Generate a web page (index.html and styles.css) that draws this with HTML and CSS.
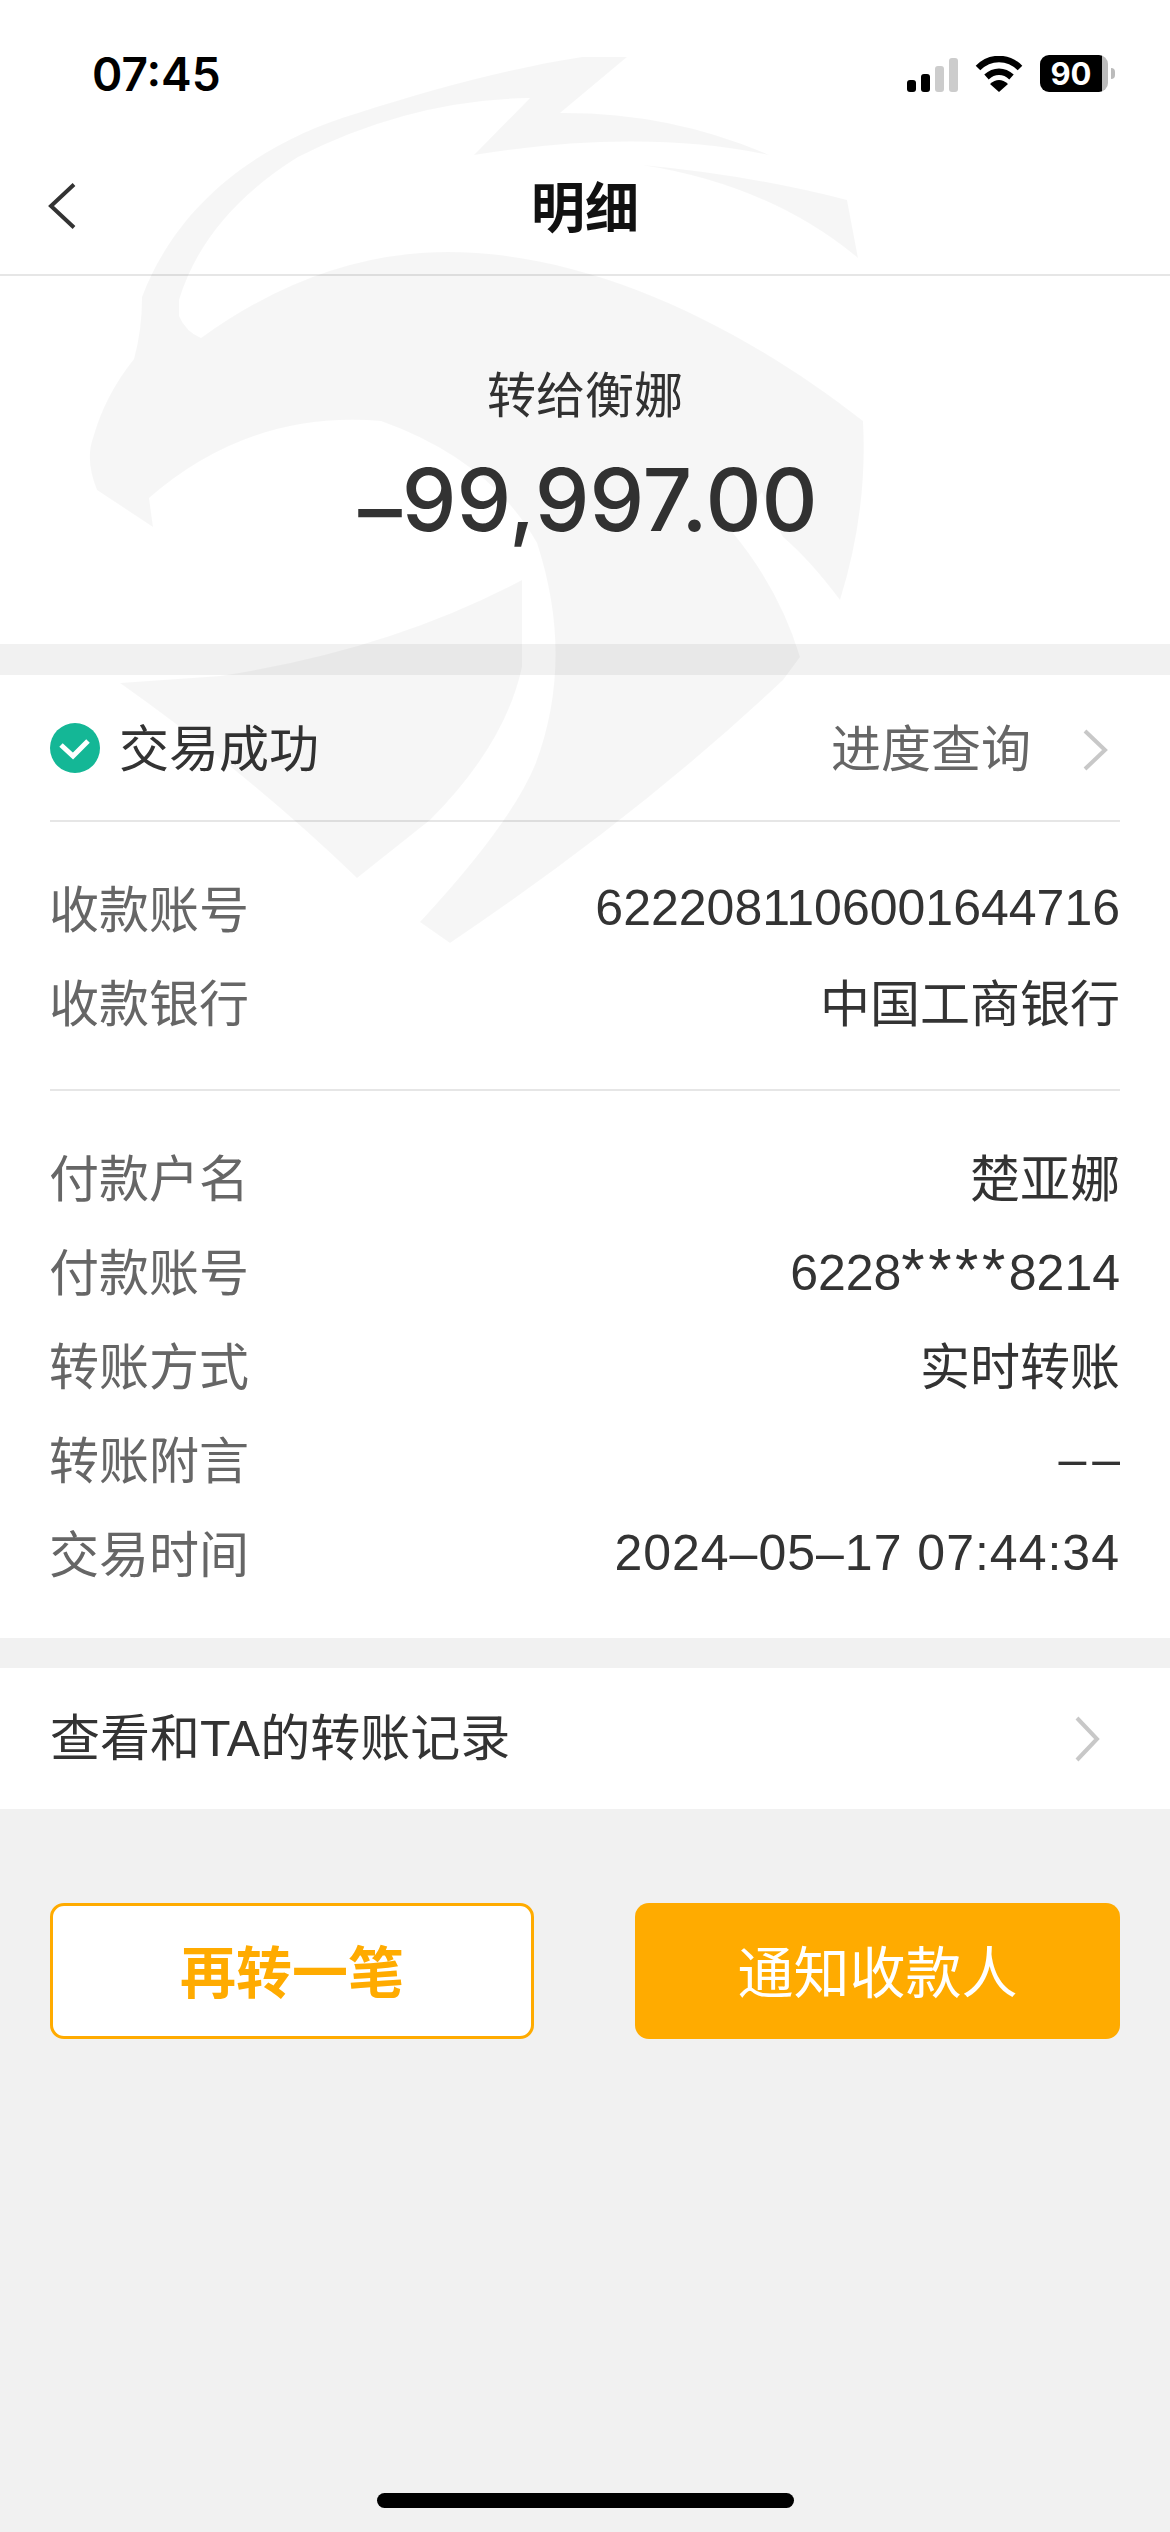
FILE: index.html

```html
<!DOCTYPE html>
<html lang="zh">
<head>
    <meta charset="UTF-8">
    <meta name="viewport" content="width=device-width, initial-scale=1.0">
    <title>明细</title>
    <link rel="stylesheet" href="styles.css">
</head>
<body>
<div class="page">

    <div class="status-bar">
        <span class="clock">07:45</span>
        <div class="status-icons">
            <svg class="signal" width="51" height="34" viewBox="0 0 51 34">
                <rect x="0" y="22" width="9" height="12" rx="3" fill="#000"/>
                <rect x="14" y="16" width="9" height="18" rx="3" fill="#000"/>
                <rect x="28" y="8" width="9" height="26" rx="3" fill="#ccc"/>
                <rect x="42" y="0" width="9" height="34" rx="3" fill="#ccc"/>
            </svg>
            <svg class="wifi" width="48" height="36" viewBox="0 0 48 36">
                <path d="M3 12C15 0 33 0 45 12" fill="none" stroke="#000" stroke-width="6.5"/>
                <path d="M11.500 21C19 14 29 14 36.500 21" fill="none" stroke="#000" stroke-width="6.500"/>
                <path d="M15 28Q24 20 33 28L24 36Z" fill="#000"/>
            </svg>
            <div class="battery"><span>90</span></div>
            <div class="battery-nub"></div>
        </div>
    </div>

    <div class="nav">
        <svg class="back" width="28" height="46" viewBox="0 0 28 46">
            <path d="M26 1.500L3 23L26 44.500" fill="none" stroke="#333" stroke-width="4"/>
        </svg>
        <h1>明细</h1>
    </div>

    <div class="summary">
        <div class="payee">转给衡娜</div>
        <div class="amount"><span class="minus">–</span>99,997.00</div>
    </div>

    <div class="card">
        <div class="state-row">
            <svg class="check" width="50" height="50" viewBox="0 0 50 50">
                <circle cx="25" cy="25" r="25" fill="#14b796"/>
                <path d="M11 22L23 33L38 18" fill="none" stroke="#fff" stroke-width="5"/>
            </svg>
            <span class="state">交易成功</span>
            <span class="progress">进度查询</span>
            <svg class="arrow" width="26" height="42" viewBox="0 0 26 42">
                <path d="M3 2L23 21L3 40" fill="none" stroke="#c8c8c8" stroke-width="4"/>
            </svg>
        </div>

        <div class="rows">
            <div class="row"><span class="label">收款账号</span><span class="value num">6222081106001644716</span></div>
            <div class="row"><span class="label">收款银行</span><span class="value">中国工商银行</span></div>
        </div>

        <div class="rows">
            <div class="row"><span class="label">付款户名</span><span class="value">楚亚娜</span></div>
            <div class="row"><span class="label">付款账号</span><span class="value num">6228<span class="mask">****</span>8214</span></div>
            <div class="row"><span class="label">转账方式</span><span class="value">实时转账</span></div>
            <div class="row"><span class="label">转账附言</span><span class="value num empty">––</span></div>
            <div class="row"><span class="label">交易时间</span><span class="value num date">2024–05–17 07:44:34</span></div>
        </div>
    </div>

    <div class="record">
        <span class="record-text">查看和TA的转账记录</span>
        <svg class="arrow" width="26" height="46" viewBox="0 0 26 46">
            <path d="M3 2L23 23L3 44" fill="none" stroke="#c8c8c8" stroke-width="4"/>
        </svg>
    </div>

    <div class="actions">
        <div class="btn btn-outline">再转一笔</div>
        <div class="btn btn-solid">通知收款人</div>
    </div>

    <div class="home-bar"></div>

    <!-- bank logo watermark, sits over the whole page -->
    <svg class="watermark" width="1170" height="1000" viewBox="0 0 1170 1000">
        <path d="M582 57L627 57L560 113Q670 112 769 155Q640 128 474 155L530 98Q410 100 298 157Q205 215 179 300L179 316Q186 332 201 338Q320 252 448 252C590 252 740 325 863 421Q868 510 840 600Q810 560 783 537Q770 515 762 492L733 533Q780 590 800 657L783 680Q640 815 450 943L420 922Q510 825 535 765Q575 660 537 543Q490 460 381 421Q250 410 149 498L153 527L97 490Q85 460 93 438Q105 395 134 359Q142 330 142 297C175 210 250 145 358 113C430 90 510 68 582 57Z"/>
        <path d="M642 165Q750 175 847 200L858 258Q770 185 642 165Z"/>
        <path d="M522 580L522 667Q505 745 430 820L357 878Q250 775 120 683L220 676Q390 650 522 580Z"/>
    </svg>
</div>
</body>
</html>
```

FILE: styles.css

```css
body {
    margin: 0;
    padding: 0;
    background-color: #f1f1f1;
    font-family: "Liberation Sans", "Noto Sans CJK SC", sans-serif;
    color: #333;
}

.page {
    position: relative;
    width: 1170px;
    height: 2532px;
    overflow: hidden;
    display: flex;
    flex-direction: column;
}

.status-bar {
    height: 98px;
    box-sizing: border-box;
    padding: 50px 55px 0 92px;
    background-color: #fff;
    display: flex;
    justify-content: space-between;
}

.clock {
    font-family: "Inter", sans-serif;
    font-size: 46px;
    font-weight: 600;
    line-height: 48px;
    color: #000;
}

.status-icons {
    display: flex;
    align-items: flex-end;
    height: 37px;
    margin-top: 5px;
}

.signal {
    margin-right: 17px;
}

.wifi {
    margin-right: 17px;
}

.battery {
    width: 68px;
    height: 37px;
    border-radius: 9px;
    background: linear-gradient(90deg, #000 91%, #bbb 91%);
    display: flex;
    align-items: center;
    justify-content: center;
    padding-right: 6px;
    box-sizing: border-box;
}

.battery span {
    font-family: "Inter", sans-serif;
    font-size: 31px;
    font-weight: 700;
    color: #fff;
}

.battery-nub {
    width: 4px;
    height: 11px;
    margin: 0 0 13px 3px;
    background-color: #bbb;
    border-radius: 0 4px 4px 0;
}

.nav {
    height: 178px;
    box-sizing: border-box;
    padding: 46px 48px 0;
    background-color: #fff;
    border-bottom: 2px solid #e6e6e6;
    display: grid;
    grid-template-columns: 1fr auto 1fr;
    align-items: center;
}

.back {
    margin-top: -6px;
}

.nav h1 {
    margin: 0;
    font-size: 54px;
    font-weight: 700;
    color: #111;
    line-height: 60px;
}

.summary {
    height: 368px;
    box-sizing: border-box;
    padding-top: 90px;
    background-color: #fff;
    text-align: center;
}

.payee {
    font-size: 49px;
    line-height: 60px;
}

.amount {
    margin-top: 19px;
    padding-left: 6px;
    font-family: "Inter", sans-serif;
    font-size: 87px;
    font-weight: 500;
    line-height: 110px;
}

.minus {
    vertical-align: -9px;
    line-height: 1;
}

.card {
    margin-top: 31px;
    padding: 0 50px;
    background-color: #fff;
}

.state-row {
    height: 145px;
    display: flex;
    align-items: center;
    font-size: 50px;
}

.check {
    margin-right: 19px;
}

.state {
    flex: 1;
    padding-bottom: 6px;
}

.progress {
    padding-bottom: 6px;
    color: #666;
}

.state-row .arrow {
    margin: 4px 12px 0 51px;
}

.rows {
    padding: 37px 0 42px;
    border-top: 2px solid #e6e6e6;
}

.rows:last-child {
    padding-bottom: 40px;
}

.row {
    height: 94px;
    display: flex;
    align-items: center;
    justify-content: space-between;
    font-size: 50px;
}

.label {
    margin-left: -1px;
    color: #666;
}

.num {
    padding-top: 4px;
}

.mask {
    font-size: 60px;
    line-height: 1;
    letter-spacing: 3.500px;
}

.date {
    letter-spacing: 1px;
}

.empty {
    letter-spacing: 6px;
    margin-right: -6px;
}

.record {
    height: 141px;
    margin-top: 30px;
    padding: 0 70px 0 50px;
    background-color: #fff;
    display: flex;
    align-items: center;
    justify-content: space-between;
    font-size: 50px;
}

.record-text {
    padding-bottom: 10px;
}

.actions {
    display: grid;
    grid-template-columns: 484px 485px;
    justify-content: space-between;
    margin-top: 94px;
    padding: 0 50px;
}

.btn {
    height: 136px;
    box-sizing: border-box;
    padding-bottom: 6px;
    border-radius: 14px;
    display: flex;
    align-items: center;
    justify-content: center;
    font-size: 56px;
}

.btn-outline {
    background-color: #fff;
    border: 3px solid #ffab00;
    color: #ffab00;
    font-weight: 700;
}

.btn-solid {
    background-color: #ffab00;
    color: #fff;
}

.home-bar {
    width: 417px;
    height: 15px;
    margin: auto auto 24px;
    border-radius: 8px;
    background-color: #000;
}

.watermark {
    position: absolute;
    top: 0;
    left: 0;
    fill: #000;
    fill-opacity: 0.035;
    pointer-events: none;
}
```
